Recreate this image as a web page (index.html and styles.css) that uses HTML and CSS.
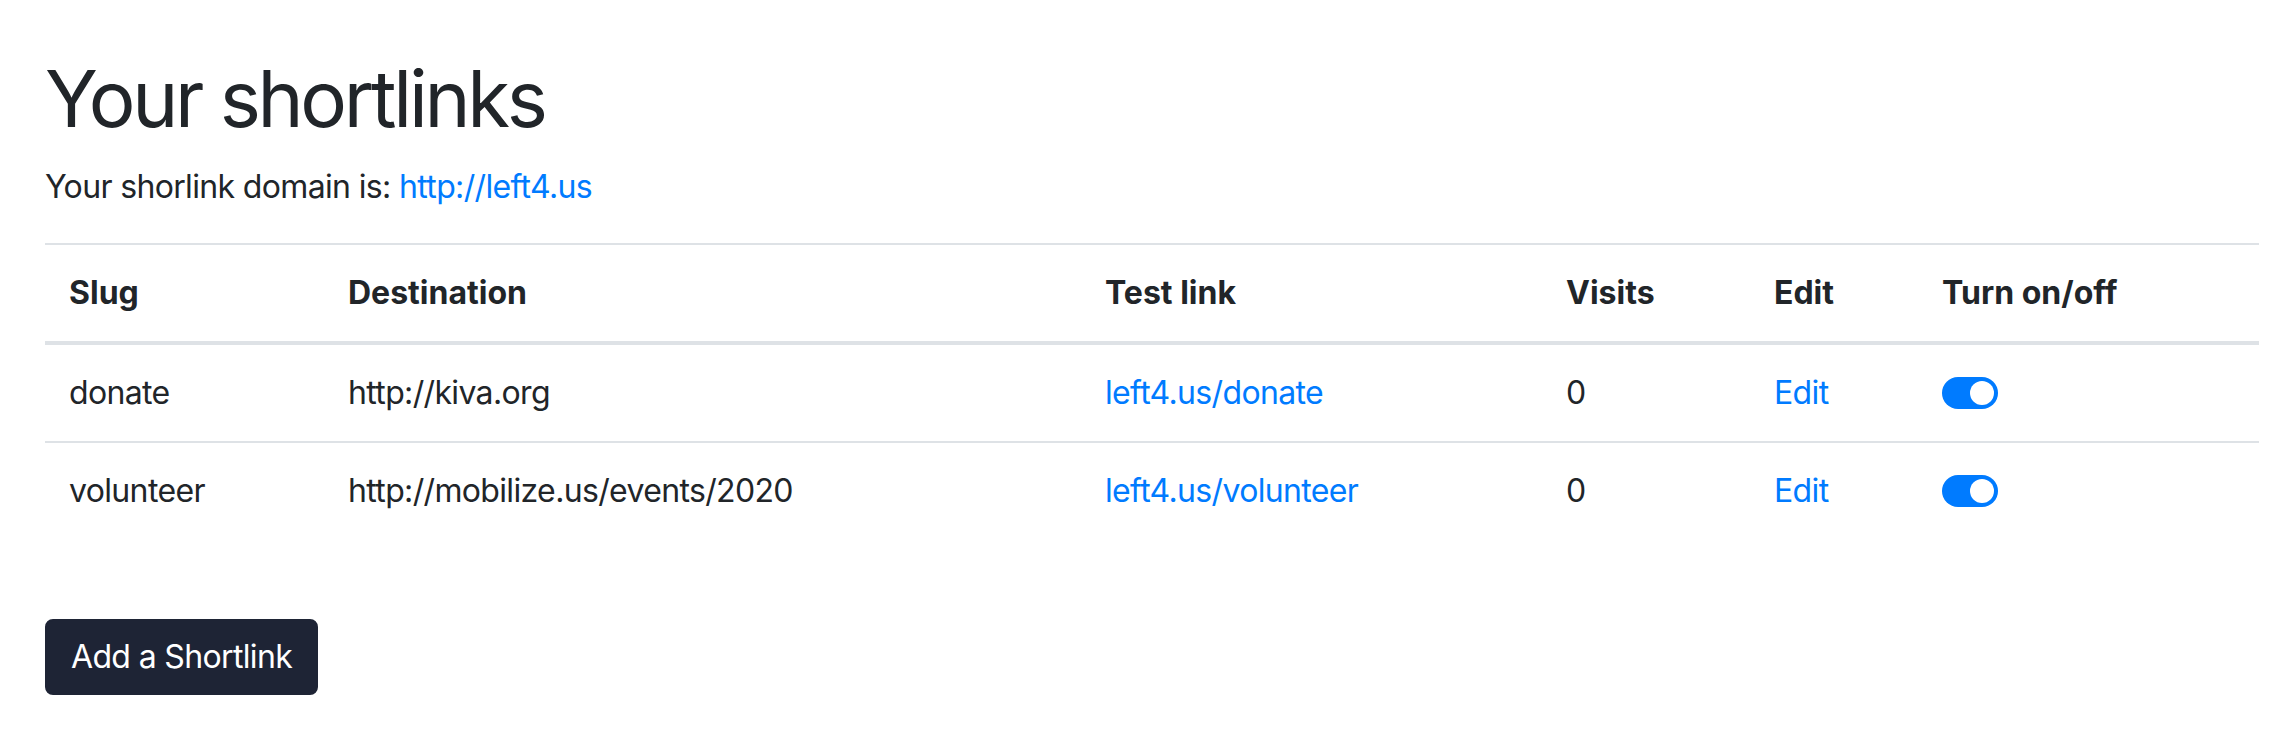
FILE: index.html
```html
<!DOCTYPE html>
<html lang="en">
<head>
<meta charset="utf-8">
<title>Your shortlinks</title>
<link rel="stylesheet" href="styles.css">
</head>
<body>
<main class="page">
  <h1 class="title">Your shortlinks</h1>
  <p class="domain">Your shorlink domain is: <a class="link" href="#">http://left4.us</a></p>
  <table class="links">
    <colgroup>
      <col class="c-slug">
      <col class="c-dest">
      <col class="c-test">
      <col class="c-visits">
      <col class="c-edit">
      <col class="c-toggle">
    </colgroup>
    <thead>
      <tr>
        <th>Slug</th>
        <th>Destination</th>
        <th>Test link</th>
        <th>Visits</th>
        <th>Edit</th>
        <th>Turn on/off</th>
      </tr>
    </thead>
    <tbody>
      <tr>
        <td>donate</td>
        <td>http://kiva.org</td>
        <td><a class="link" href="#">left4.us/donate</a></td>
        <td>0</td>
        <td><a class="link" href="#">Edit</a></td>
        <td><span class="switch"></span></td>
      </tr>
      <tr>
        <td>volunteer</td>
        <td>http://mobilize.us/events/2020</td>
        <td><a class="link" href="#">left4.us/volunteer</a></td>
        <td>0</td>
        <td><a class="link" href="#">Edit</a></td>
        <td><span class="switch"></span></td>
      </tr>
    </tbody>
  </table>
  <div class="actions">
    <button class="btn" type="button">Add a Shortlink</button>
  </div>
</main>
</body>
</html>
```

FILE: styles.css
```css
html, body {
  margin: 0;
  padding: 0;
  background: #ffffff;
}

body {
  font-family: "Inter", "Liberation Sans", Arial, sans-serif;
  font-size: 32px;
  line-height: 48px;
  color: #212529;
  letter-spacing: -0.65px;
}

.page {
  padding: 51px 15px 0 45px;
}

.title {
  font-size: 78px;
  line-height: 96px;
  font-weight: 400;
  margin: 0 0 16px 0;
  letter-spacing: -3.3px;
}

.domain {
  margin: 0 0 32px 0;
}

.link {
  color: #007bff;
  text-decoration: none;
}

.links {
  width: 100%;
  border-collapse: collapse;
  margin: 0 0 32px 0;
  table-layout: fixed;
}

.c-slug { width: 279px; }
.c-dest { width: 757px; }
.c-test { width: 461px; }
.c-visits { width: 208px; }
.c-edit { width: 168px; }
.c-toggle { width: auto; }

.links th,
.links td {
  padding: 24px;
  text-align: left;
  vertical-align: top;
  border-top: 2px solid #dee2e6;
  white-space: nowrap;
}

.links thead th {
  font-weight: 700;
  letter-spacing: 0;
  vertical-align: bottom;
  border-bottom: 4px solid #dee2e6;
}

.switch {
  display: block;
  position: relative;
  width: 56px;
  height: 32px;
  margin: 8px 0;
  border-radius: 16px;
  background: #007bff;
}

.switch::after {
  content: "";
  position: absolute;
  top: 4px;
  left: 28px;
  width: 24px;
  height: 24px;
  border-radius: 50%;
  background: #ffffff;
}

.actions {
  padding-top: 48px;
}

.btn {
  font-family: inherit;
  font-size: 32px;
  line-height: 48px;
  letter-spacing: -0.65px;
  color: #ffffff;
  background: #1e2435;
  border: 2px solid #1e2435;
  border-radius: 8px;
  padding: 12px 24px;
  margin: 0;
}
```
